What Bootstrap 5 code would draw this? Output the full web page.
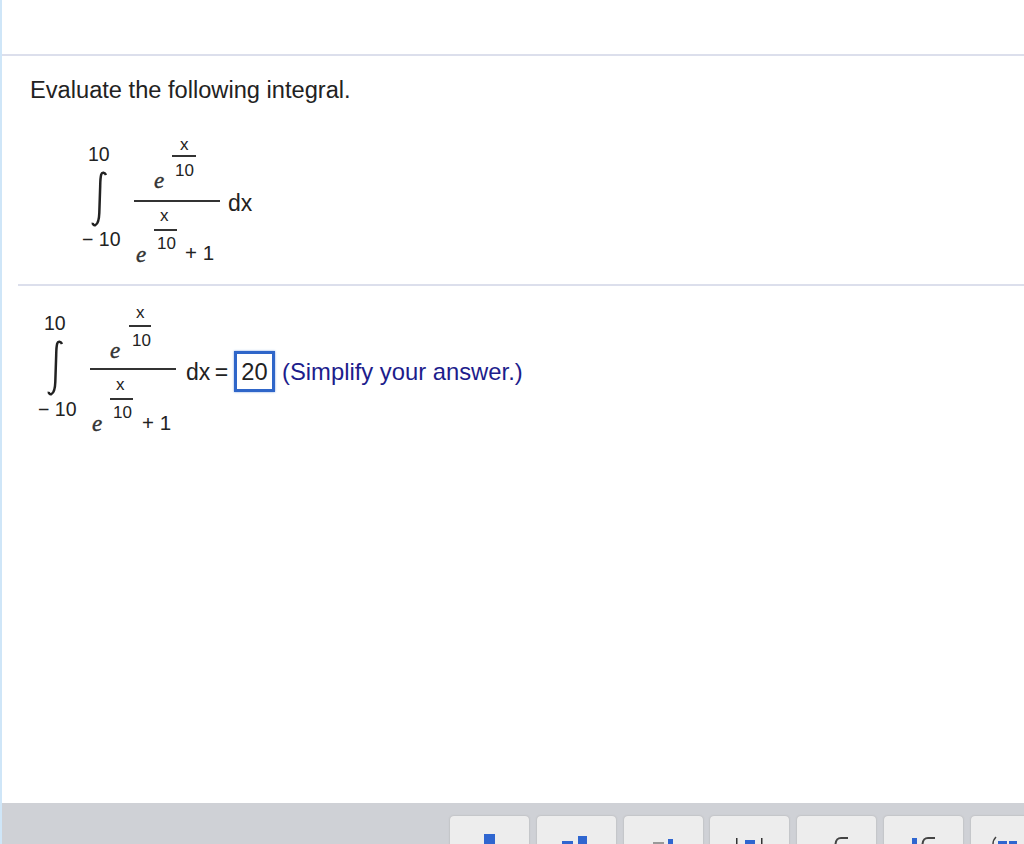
<!DOCTYPE html>
<html lang="en">
<head>
<meta charset="utf-8">
<title>Evaluate the following integral</title>
<link href="https://cdn.jsdelivr.net/npm/bootstrap@5.3.0/dist/css/bootstrap.min.css" rel="stylesheet">
<style>
html,body{height:100%;overflow:hidden}
body{font-family:"Liberation Sans",Arial,sans-serif;color:#222;background:#fff;font-size:23.65px}
.shell{height:844px;border-left:2px solid #cfe6f8}
.topgap{height:56px;border-bottom:2px solid #dcdfec}
.mainpane{height:747px}
.prompt{padding:20px 0 0 28px;line-height:28px;height:60px}
.sep{height:2px;background:#dcdfec;margin-left:16px}
.eq{position:relative;font-size:20.500px;line-height:1}
.eq1{height:168px}
.eq2{height:176px}
.m{position:absolute;white-space:nowrap;line-height:1}
.lim{font-size:19.5px}
.sm{font-size:17px}
.it{font-family:"Liberation Serif",serif;font-style:italic;font-size:23px;color:#333;-webkit-text-stroke:.4px #333}
.rule{position:absolute;height:2px;background:#333}
.dxt{font-size:23px;word-spacing:-2px}
.ans{position:absolute;border:3px solid #2f66c9;width:41px;height:41px;font-size:23.65px;line-height:36px;text-align:center;background:#fff;box-shadow:0 0 2px #7fa2e0}
.hint{color:#1d1d8c;font-size:23.8px}
.tray{height:41px;background:#cfd1d6;display:flex;gap:7.8px;padding:13px 0 0 448px;overflow:hidden}
.key{flex:0 0 79px;height:40px;background:#ededed;border-radius:4px 4px 0 0;box-shadow:0 0 2px #aaa;position:relative;overflow:hidden}
.key svg{display:block}
</style>
</head>
<body>
<div class="shell">
<div class="topgap"></div>
<div class="mainpane">
<div class="prompt">Evaluate the following integral.</div>
<div class="eq eq1">
<span class="m lim" style="left:86px;top:29px">10</span>
<svg class="m" style="left:89px;top:55px" width="18" height="56" viewBox="0 0 18 56"><path d="M15 4C14 1.500 11 .8 10.200 3.500 9.300 7 9.300 11 9.200 15L8.300 42C8.100 48 7.500 52.500 4.500 54 2.800 54.600 1.500 53.200 1.800 51.800" fill="none" stroke="#222" stroke-width="2.500"/></svg>
<span class="m lim" style="left:80px;top:114px">− 10</span>
<span class="m sm" style="left:178px;top:20px">x</span>
<div class="rule" style="left:170px;top:39px;width:24px"></div>
<span class="m sm" style="left:173px;top:46px">10</span>
<span class="m it" style="left:152px;top:53px">e</span>
<div class="rule" style="left:132px;top:84px;width:86px"></div>
<span class="m sm" style="left:158px;top:91px">x</span>
<div class="rule" style="left:152px;top:113px;width:23px"></div>
<span class="m sm" style="left:155px;top:119px">10</span>
<span class="m it" style="left:134px;top:127px">e</span>
<span class="m" style="left:183px;top:127px">+ 1</span>
<span class="m dxt" style="left:226px;top:76px">dx</span>
</div>
<div class="sep"></div>
<div class="eq eq2">
<span class="m lim" style="left:42px;top:28px">10</span>
<svg class="m" style="left:45px;top:54px" width="18" height="56" viewBox="0 0 18 56"><path d="M15 4C14 1.500 11 .8 10.200 3.500 9.300 7 9.300 11 9.200 15L8.300 42C8.100 48 7.500 52.500 4.500 54 2.800 54.600 1.500 53.200 1.800 51.800" fill="none" stroke="#222" stroke-width="2.500"/></svg>
<span class="m lim" style="left:36px;top:114px">− 10</span>
<span class="m sm" style="left:134px;top:18px">x</span>
<div class="rule" style="left:127px;top:39px;width:22px"></div>
<span class="m sm" style="left:130px;top:46px">10</span>
<span class="m it" style="left:108px;top:53px">e</span>
<div class="rule" style="left:88px;top:82px;width:86px"></div>
<span class="m sm" style="left:114px;top:90px">x</span>
<div class="rule" style="left:108px;top:112px;width:23px"></div>
<span class="m sm" style="left:111px;top:118px">10</span>
<span class="m it" style="left:90px;top:126px">e</span>
<span class="m" style="left:140px;top:127px">+ 1</span>
<span class="m dxt" style="left:184px;top:75px">dx =</span>
<div class="ans" style="left:232px;top:65px">20</div>
<span class="m hint" style="left:280px;top:74px">(Simplify your answer.)</span>
</div>
</div>
<div class="tray">
<div class="key"><svg width="79" height="28"><rect x="34" y="18" width="11" height="10" fill="#2f66d0"/></svg></div>
<div class="key"><svg width="79" height="28"><rect x="25" y="25" width="11" height="3" fill="#2f66d0"/><rect x="41" y="20" width="9" height="8" fill="#2f66d0"/></svg></div>
<div class="key"><svg width="79" height="28"><rect x="29" y="26" width="11" height="2" fill="#999"/><rect x="44" y="23" width="5" height="5" fill="#2f66d0"/></svg></div>
<div class="key"><svg width="79" height="28"><rect x="26" y="22" width="1.500" height="6" fill="#333"/><rect x="35" y="24" width="10" height="4" fill="#2f66d0"/><rect x="51" y="22" width="1.500" height="6" fill="#333"/></svg></div>
<div class="key"><svg width="79" height="28"><path d="M38.500 28C39 24 40 22 44 22H51" fill="none" stroke="#444" stroke-width="2"/></svg></div>
<div class="key"><svg width="79" height="28"><rect x="28" y="22" width="5" height="6" fill="#2f66d0"/><path d="M38.500 28C39 24 40 22 44 22H51" fill="none" stroke="#444" stroke-width="2"/></svg></div>
<div class="key"><svg width="79" height="28"><path d="M25 21C23 23 22 25 22 28" fill="none" stroke="#444" stroke-width="1.500"/><rect x="27" y="25" width="9" height="3" fill="#2f66d0"/><rect x="38" y="25" width="8" height="3" fill="#2f66d0"/></svg></div>
</div>
</div>
</body>
</html>
